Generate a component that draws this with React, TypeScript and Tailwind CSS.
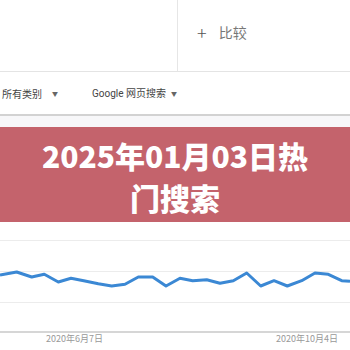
import React from "react";

const pts: [number, number][] = [
  [0, 275], [16.7, 272], [31.7, 277], [44.3, 274.3], [58.3, 282], [71, 278.3], [85, 281],
  [98.3, 283.7], [111.7, 286], [125, 284.3], [138.3, 277], [152.7, 277], [166, 286],
  [180, 278.3], [192.7, 280.7], [206.7, 279.7], [220, 283.3], [233.3, 280.7], [246.7, 273],
  [260.7, 286], [274, 280.7], [287.3, 286], [301.7, 280.7], [315, 273], [328.3, 274.3],
  [341.7, 280.7], [350, 281.3],
];

export default function App() {
  const top = 222;
  const d = pts.map((p, i) => `${i ? "L" : "M"}${p[0]} ${p[1] - top}`).join(" ");
  return (
    <div
      className="w-[350px] h-[350px] overflow-hidden bg-white flex flex-col"
      style={{ fontFamily: '"Noto Sans CJK SC", "Noto Sans", sans-serif' }}
    >
      <div className="h-[71px] flex shrink-0">
        <div className="w-[178px] border-r border-[#e6e6e6]" />
        <div className="flex-1 flex items-center pl-[19px] pb-[7px]">
          <span className="text-[#555] text-[18px] leading-none font-light">+</span>
          <span className="ml-[12px] text-[#777] text-[14px] leading-none">比较</span>
        </div>
      </div>
      <div className="h-px bg-[#e4e4e4] shrink-0" />
      <div className="h-[42px] flex items-center text-[10px] text-[#444] shrink-0">
        <span className="ml-[2px]">所有类别</span>
        <span className="ml-[10px] text-[6px] text-[#666]">▼</span>
        <span className="ml-[34px]" style={{ fontFamily: 'Roboto, "Noto Sans CJK SC", sans-serif' }}>Google 网页搜索</span>
        <span className="ml-[5px] text-[6px] text-[#666]">▼</span>
      </div>
      <div className="h-[2px] bg-[#d2d2d2] shrink-0" />
      <div className="h-[11px] bg-[#f7f7f9] shrink-0" />
      <div className="h-[95px] bg-[#c4636c] flex items-center justify-center shrink-0">
        <div className="text-white font-black text-[30px] leading-[42px] text-center w-[280px] pt-[2px]">
          2025年01月03日热门搜索
        </div>
      </div>
      <div className="relative flex-1">
        <svg width="350" height="111" className="block">
          <line x1="0" y1="18.5" x2="350" y2="18.5" stroke="#ececec" strokeWidth="1" />
          <line x1="0" y1="49.5" x2="350" y2="49.5" stroke="#ececec" strokeWidth="1" />
          <line x1="0" y1="80.5" x2="350" y2="80.5" stroke="#ececec" strokeWidth="1" />
          <line x1="0" y1="110" x2="350" y2="110" stroke="#c8c8c8" strokeWidth="1.5" />
          <path d={d} fill="none" stroke="#3b88d4" strokeWidth="3" strokeLinejoin="round" />
        </svg>
        <div className="flex text-[9px] leading-none text-[#999] mt-[1px]">
          <span className="ml-[46px]">2020年6月7日</span>
          <span className="ml-[173px]">2020年10月4日</span>
        </div>
      </div>
    </div>
  );
}
